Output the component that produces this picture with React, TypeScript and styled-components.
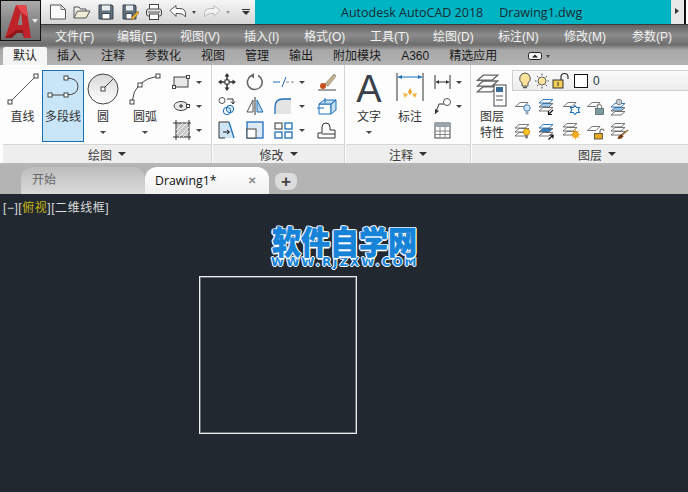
import React from 'react';
import styled, { createGlobalStyle } from 'styled-components';

const UI_FONT = '"Liberation Sans", "Noto Sans CJK SC", sans-serif';

const GlobalStyle = createGlobalStyle`
  html, body { margin: 0; padding: 0; background: #212830; }
  body { font-family: ${UI_FONT}; overflow: hidden; }
  #root { width: 688px; height: 492px; }
`;

const MENUS = [
  ['文件(F)', 62],
  ['编辑(E)', 63],
  ['视图(V)', 64],
  ['插入(I)', 60],
  ['格式(O)', 66],
  ['工具(T)', 63],
  ['绘图(D)', 65],
  ['标注(N)', 66],
  ['修改(M)', 68],
  ['参数(P)', 50],
] as const;

const TABS = ['默认', '插入', '注释', '参数化', '视图', '管理', '输出', '附加模块', 'A360', '精选应用'];

const Icon = ({ w = 20, h = 20, children }: { w?: number; h?: number; children: React.ReactNode }) => (
  <svg width={w} height={h} viewBox={`0 0 ${w} ${h}`} fill="none" style={{ display: 'block', flex: 'none' }}>
    {children}
  </svg>
);

const Grip = ({ x, y, s = 4 }: { x: number; y: number; s?: number }) => (
  <rect x={x - s / 2} y={y - s / 2} width={s} height={s} fill="#fff" stroke="#333" strokeWidth="0.9" />
);

const Layers = ({ top = '#666', fill = '#fff', x = 0, y = 0 }: { top?: string; fill?: string; x?: number; y?: number }) => (
  <g transform={`translate(${x} ${y})`} stroke="#666" strokeWidth="0.9">
    <path d="M1 13 L5 9.5 H15 L11 13Z" fill="#fff" />
    <path d="M1 9 L5 5.5 H15 L11 9Z" fill={fill} />
    <path d="M1 5 L5 1.5 H15 L11 5Z" fill="#fff" stroke={top} />
  </g>
);

const Sheet = () => <path d="M1.5 8.5 L6 4.5 H14 L10 8.5Z" fill="#fff" stroke="#666" strokeWidth="0.9" />;

const LAYER_ICONS = [
  <Icon key="0">
    <Sheet />
    <circle cx="13" cy="10" r="3.2" fill="#cfe4f6" stroke="#3b78b8" strokeWidth="0.9" />
    <rect x="11.6" y="13" width="2.8" height="3.4" fill="#8fa3b5" />
  </Icon>,
  <Icon key="1">
    <Layers fill="#9cc7ea" top="#1d6fb8" />
    <path d="M15 12 L10.5 16.5 M10.5 13 V16.5 H14" stroke="#111" strokeWidth="1.2" />
  </Icon>,
  <Icon key="2">
    <Sheet />
    <path d="M13 7.5 L14.8 9.5 H17.5 L16.2 12 L17.5 14.5 H14.8 L13 16.5 L11.2 14.5 H8.5 L9.8 12 L8.5 9.5 H11.2Z" fill="#fff" stroke="#1d6fb8" strokeWidth="1.1" />
  </Icon>,
  <Icon key="3">
    <Sheet />
    <rect x="9.5" y="10.5" width="8" height="6" fill="#7d9a9c" stroke="#56686a" strokeWidth="0.8" />
    <path d="M11.3 10.5 V8.8 a2.2 2.2 0 0 1 4.4 0 V10.5" stroke="#666" />
  </Icon>,
  <Icon key="4">
    <Layers fill="#8dc0e8" top="#1d6fb8" y={4} />
    <circle cx="9" cy="4" r="2.8" fill="#c6ced6" stroke="#777" strokeWidth="0.9" />
  </Icon>,
  <Icon key="5">
    <Layers y={1} />
    <circle cx="12.5" cy="10" r="3.1" fill="#ffc928" stroke="#c58600" strokeWidth="0.9" />
    <rect x="11.2" y="13" width="2.6" height="3.4" fill="#777" />
  </Icon>,
  <Icon key="6">
    <Layers top="#1d6fb8" fill="#2f7fc4" y={1} />
    <path d="M10.5 17.5 L15 13 M11.5 13 H15 V16.5" stroke="#111" strokeWidth="1.2" />
  </Icon>,
  <Icon key="7">
    <Layers />
    <circle cx="13.5" cy="12.5" r="2.9" fill="#ffb020" stroke="#e08a00" strokeWidth="0.8" />
    <path d="M13.5 7.5 V8.7 M13.5 16.3 V17.5 M8.5 12.5 H9.7 M17.3 12.5 H18.5 M10 9 L10.9 9.9 M17 9 L16.1 9.9 M10 16 L10.9 15.1 M17 16 L16.1 15.1" stroke="#f0a000" />
  </Icon>,
  <Icon key="8">
    <Sheet />
    <rect x="8.5" y="11.5" width="8" height="5.5" fill="#e8a820" stroke="#444" strokeWidth="0.8" />
    <path d="M14 11.5 V9 a2 2 0 0 1 4 0" stroke="#555" />
  </Icon>,
  <Icon key="9">
    <Layers />
    <path d="M18 8 L12 13" stroke="#9a6a30" strokeWidth="1.6" />
    <path d="M7.5 17 Q8 13.5 11.5 12 L13.5 14.5 Q11.5 17.5 7.5 17Z" fill="#7a3f10" />
  </Icon>,
];

export default function App() {
  return (
    <Window>
      <GlobalStyle />
      <AppButton>
        <svg width="26" height="35" viewBox="0 0 26 35" style={{ flex: 'none' }}>
          <path d="M0 35 L11 2 H21 L26 35 H19 L18 27 H11 L6.5 35Z M12.5 22 H17.5 L16 9Z" fill="#bf2228" fillRule="evenodd" />
          <path d="M11 2 H21 L23 14 L16 9Z" fill="#e2494e" />
          <path d="M0 35 L11 27 H18 L19 35 L17 30 H12 L6.5 35Z" fill="#8f1519" />
        </svg>
        <AppCaret />
      </AppButton>

      <TitleBar>
        <Qat>
          <QatIcon>
            <Icon w={18} h={18}>
              <path d="M1.5 2 H12 L16.5 6.5 V16 H1.5Z" fill="#fafafa" stroke="#555" />
              <path d="M12 2 V6.5 H16.5" stroke="#777" />
            </Icon>
          </QatIcon>
          <QatIcon>
            <Icon w={18} h={18}>
              <path d="M1 15 V4 H6 L7.5 6 H13 V8" fill="#eee" stroke="#555" />
              <path d="M1 15 L4.5 8 H17 L13 15Z" fill="#f1ecd8" stroke="#555" />
            </Icon>
          </QatIcon>
          <QatIcon>
            <Icon w={18} h={18}>
              <path d="M2 2 H15 L16 3 V16 H2Z" fill="#61707c" stroke="#3b4650" />
              <rect x="5" y="2.5" width="8" height="5" fill="#e8edf0" />
              <rect x="5" y="10.5" width="8" height="5.5" fill="#fff" stroke="#3b4650" />
            </Icon>
          </QatIcon>
          <QatIcon>
            <Icon w={18} h={18}>
              <path d="M2 2 H14 L15 3 V16 H2Z" fill="#61707c" stroke="#3b4650" />
              <rect x="5" y="2.5" width="7" height="5" fill="#e8edf0" />
              <rect x="5" y="10.5" width="6" height="5.5" fill="#fff" stroke="#3b4650" />
              <path d="M10 17 L11 14 L17 8 L18 10 L12.5 16Z" fill="#f0b030" stroke="#8a6a20" strokeWidth="0.6" />
            </Icon>
          </QatIcon>
          <QatIcon>
            <Icon w={18} h={18}>
              <rect x="4.5" y="1.5" width="9" height="5" fill="#fff" stroke="#444" />
              <rect x="1.5" y="6" width="15" height="7" rx="2" fill="#e6e6e6" stroke="#444" />
              <rect x="4.5" y="11" width="9" height="5.5" fill="#fff" stroke="#444" />
              <path d="M3 9 H15" stroke="#555" />
            </Icon>
          </QatIcon>
          <QatIcon>
            <Icon w={18} h={18}>
              <path d="M1 7.5 L7 2.5 V5.5 H11 Q16.5 5.5 16.5 11 V14 Q14.5 10.5 10.5 10.5 H7 V13.5Z" fill="#fdfdfd" stroke="#555" />
            </Icon>
          </QatIcon>
          <MiniCaret $light={false} />
          <QatIcon>
            <Icon w={18} h={18}>
              <path d="M17 7.5 L11 2.5 V5.5 H7 Q1.5 5.5 1.5 11 V14 Q3.5 10.5 7.5 10.5 H11 V13.5Z" fill="#f1f1f1" stroke="#bbb" />
            </Icon>
          </QatIcon>
          <MiniCaret $light />
          <QatMenu />
        </Qat>
        <TitleCenter>
          <span>Autodesk AutoCAD 2018</span>
          <span>Drawing1.dwg</span>
        </TitleCenter>
        <TitleArrow />
        <TitleEnd />
      </TitleBar>

      <MenuBar>
        {MENUS.map(([label, width]) => (
          <MenuItem key={label} style={{ width }}>
            {label}
          </MenuItem>
        ))}
      </MenuBar>

      <TabStrip>
        {TABS.map((t, i) => (
          <RibbonTab key={t} $active={i === 0}>
            {t}
          </RibbonTab>
        ))}
        <RibbonToggle>
          <svg width="16" height="9" viewBox="0 0 16 9">
            <rect x="0.5" y="0.5" width="13" height="7" rx="2" fill="#f4f4f4" stroke="#222" />
            <path d="M4 5.5 L7 2.5 L10 5.5Z" fill="#222" />
          </svg>
          <MiniCaret $light={false} />
        </RibbonToggle>
      </TabStrip>

      <Ribbon>
        <Panel $w={208} $title="绘图">
          <PanelBody>
            <LargeButton $w={39}>
              <Icon w={32} h={32}>
                <path d="M3 29 L29 3" stroke="#555" />
                <Grip x={3} y={29} />
                <Grip x={29} y={3} />
              </Icon>
              <LargeLabel>直线</LargeLabel>
            </LargeButton>
            <LargeButton $w={42} $active>
              <Icon w={34} h={32}>
                <path d="M4 22 H20 M20 5 Q32 5 32 13.5 Q32 22 20 22" stroke="#444" />
                <Grip x={4} y={22} />
                <Grip x={20} y={22} />
                <Grip x={20} y={5} />
              </Icon>
              <LargeLabel>多段线</LargeLabel>
            </LargeButton>
            <LargeButton $w={38}>
              <Icon w={32} h={32}>
                <defs>
                  <linearGradient id="circleFill" x1="0" y1="0" x2="0" y2="1">
                    <stop offset="0" stopColor="#d8d8d8" />
                    <stop offset="1" stopColor="#fff" />
                  </linearGradient>
                </defs>
                <circle cx="16" cy="16" r="15" fill="url(#circleFill)" stroke="#444" />
                <path d="M16 16 L26 6" stroke="#444" />
                <Grip x={16} y={16} />
              </Icon>
              <LargeLabel>圆</LargeLabel>
              <SmallDown />
            </LargeButton>
            <LargeButton $w={46}>
              <Icon w={32} h={32}>
                <path d="M3 29 Q5 7 29 3" stroke="#444" />
                <Grip x={3} y={29} />
                <Grip x={11} y={12} />
                <Grip x={29} y={3} />
              </Icon>
              <LargeLabel>圆弧</LargeLabel>
              <SmallDown />
            </LargeButton>
            <SmallColumn>
              <SmallRow>
                <Icon>
                  <rect x="3" y="5" width="14" height="10" fill="#e8e8e8" stroke="#444" />
                  <Grip x={3} y={15} s={3} />
                  <Grip x={17} y={5} s={3} />
                </Icon>
                <SideCaret />
              </SmallRow>
              <SmallRow>
                <Icon>
                  <ellipse cx="10" cy="10" rx="7" ry="4.5" fill="#e8e8e8" stroke="#444" />
                  <path d="M8 10 H12 M10 8 V12" stroke="#222" />
                  <Grip x={17} y={10} s={3} />
                </Icon>
                <SideCaret />
              </SmallRow>
              <SmallRow>
                <Icon>
                  <rect x="5" y="3" width="13" height="14" fill="#c8c8c8" stroke="#333" />
                  <path d="M5 10 L12 3 M5 14 L16 3 M8 17 L18 7 M12 17 L18 11" stroke="#fff" strokeWidth="0.8" />
                  <path d="M2 3 H5 M18 17 H20 M5 0 V3 M18 17 V20 M2 17 H5 M5 17 V20 M18 0 V3 M18 3 H20" stroke="#333" />
                </Icon>
                <SideCaret />
              </SmallRow>
            </SmallColumn>
          </PanelBody>
        </Panel>

        <Panel $w={131} $title="修改">
          <ToolGrid>
            <ToolCell>
              <Icon>
                <path d="M10 3 V17 M3 10 H17" stroke="#333" strokeWidth="1.6" />
                <path d="M10 1 L7.5 4.5 H12.5Z M10 19 L7.5 15.5 H12.5Z M1 10 L4.5 7.5 V12.5Z M19 10 L15.5 7.5 V12.5Z" fill="#333" />
                <rect x="8" y="8" width="4" height="4" fill="#fff" stroke="#333" />
              </Icon>
            </ToolCell>
            <ToolCell>
              <Icon>
                <path d="M13 3.5 A7.4 7.4 0 1 1 6 3.8" stroke="#666" strokeWidth="1.6" />
                <path d="M9 1 L5 3.7 L9 6.5Z" fill="#666" />
              </Icon>
            </ToolCell>
            <ToolCell $caret>
              <Icon w={24}>
                <path d="M1 10 H8" stroke="#1d6fb8" />
                <path d="M14 10 H23" stroke="#888" strokeDasharray="3 2" />
                <path d="M10 15 L14 5" stroke="#1d6fb8" />
              </Icon>
              <ToolCaret />
            </ToolCell>
            <ToolCell>
              <Icon w={22}>
                <path d="M9 12 L18 2 L20 4 L12 14Z" fill="#c9b48a" stroke="#777" strokeWidth="0.7" />
                <circle cx="7" cy="14" r="3" fill="#c8501e" />
                <path d="M2 18 H20" stroke="#444" />
              </Icon>
            </ToolCell>

            <ToolCell>
              <Icon>
                <circle cx="5" cy="4.5" r="3" stroke="#555" />
                <circle cx="13" cy="13" r="3.7" fill="#d8ebf8" stroke="#1d6fb8" />
                <circle cx="10" cy="15" r="3.7" stroke="#1d6fb8" />
                <path d="M10 3 H16 V7 M14 5.5 L16 8 L18 5.5" stroke="#333" />
              </Icon>
            </ToolCell>
            <ToolCell>
              <Icon>
                <path d="M10 1 V19" stroke="#333" />
                <path d="M8 4 V16 H2Z" stroke="#555" />
                <path d="M12 4 V16 H18Z" fill="#b8d4ea" stroke="#1d6fb8" />
              </Icon>
            </ToolCell>
            <ToolCell $caret>
              <Icon w={24}>
                <path d="M3 18 V11 Q3 3 11 3 H19 V18Z" fill="#e4e4e4" />
                <path d="M3 18 V11 Q3 3 11 3 H19" stroke="#1d6fb8" strokeWidth="1.3" />
              </Icon>
              <ToolCaret />
            </ToolCell>
            <ToolCell>
              <Icon w={22}>
                <path d="M3 8 H15 V18 H3Z" fill="#fff" stroke="#1d6fb8" />
                <path d="M3 8 L8 4 H20 L15 8Z M15 8 L20 4 V14 L15 18Z" fill="#c4dff2" stroke="#1d6fb8" />
                <path d="M1 12 H8 M9 2 V7" stroke="#1d6fb8" />
              </Icon>
            </ToolCell>

            <ToolCell>
              <Icon>
                <path d="M2 2 H12 L17 18 H2Z" fill="#cfe4f4" />
                <path d="M12 2 H2 V18 H8" stroke="#333" />
                <path d="M12 2 L17 18" stroke="#1d6fb8" strokeWidth="1.3" />
                <path d="M6 12 H12 M10 10 L12.5 12 L10 14" stroke="#111" />
              </Icon>
            </ToolCell>
            <ToolCell>
              <Icon>
                <rect x="2" y="2" width="16" height="16" fill="#dbeaf6" stroke="#1d6fb8" strokeWidth="1.3" />
                <rect x="2" y="9" width="9" height="9" fill="#fff" stroke="#444" />
              </Icon>
            </ToolCell>
            <ToolCell $caret>
              <Icon w={24}>
                <rect x="3" y="3" width="7" height="6" stroke="#333" />
                <rect x="13" y="3" width="7" height="6" stroke="#1d6fb8" strokeWidth="1.3" />
                <rect x="3" y="12" width="7" height="6" stroke="#1d6fb8" strokeWidth="1.3" />
                <rect x="13" y="12" width="7" height="6" stroke="#1d6fb8" strokeWidth="1.3" />
              </Icon>
              <ToolCaret />
            </ToolCell>
            <ToolCell>
              <Icon w={22}>
                <path d="M2 18 V13 H6 V7 Q6 3 10 3 Q14 3 14 7 V10 H19 V18Z" fill="#fff" stroke="#333" />
                <path d="M6 14 H19" stroke="#333" />
              </Icon>
            </ToolCell>
          </ToolGrid>
        </Panel>

        <Panel $w={124} $title="注释">
          <PanelBody>
            <LargeButton $w={46}>
              <BigA>A</BigA>
              <LargeLabel>文字</LargeLabel>
              <SmallDown />
            </LargeButton>
            <LargeButton $w={36}>
              <Icon w={28} h={32}>
                <path d="M1 0 V28 M27 0 V28" stroke="#333" />
                <path d="M2 4 H26" stroke="#1d6fb8" />
                <path d="M2 4 L6 2 V6Z M26 4 L22 2 V6Z" fill="#1d6fb8" />
                <path d="M14 15 L12 19 L14 22 L16 19Z" fill="#f0a020" />
                <path d="M7 20 L12 21 L9 25Z M21 20 L16 21 L19 25Z" fill="#f2b440" />
              </Icon>
              <LargeLabel>标注</LargeLabel>
            </LargeButton>
            <SmallColumn>
              <SmallRow>
                <Icon>
                  <path d="M4 3 V17 M19 3 V17" stroke="#333" />
                  <path d="M5 10 H18" stroke="#333" />
                  <path d="M5 10 L8 8 V12Z M18 10 L15 8 V12Z" fill="#333" />
                </Icon>
                <SideCaret />
              </SmallRow>
              <SmallRow>
                <Icon>
                  <path d="M4 18 L8 8 H13" stroke="#333" />
                  <path d="M4 18 L4 13 L8 15Z" fill="#333" />
                  <circle cx="16" cy="6" r="3.5" fill="#fff" stroke="#555" />
                </Icon>
                <SideCaret />
              </SmallRow>
              <SmallRow>
                <Icon>
                  <rect x="4" y="3" width="15" height="15" fill="#fff" stroke="#444" />
                  <rect x="4" y="3" width="15" height="4" fill="#9aa4ad" />
                  <path d="M4 11 H19 M4 14.5 H19 M9 7 V18 M14 7 V18" stroke="#888" />
                </Icon>
              </SmallRow>
            </SmallColumn>
          </PanelBody>
        </Panel>

        <Panel $w={250} $title="图层">
          <PanelBody>
            <LargeButton $w={40}>
              <Icon w={32} h={34}>
                <g transform="scale(1.45)">
                  <Layers />
                </g>
                <rect x="18" y="12" width="12" height="21" fill="#fff" stroke="#444" />
                <rect x="20" y="14" width="7" height="5" fill="#3c6a96" />
                <path d="M20 23 H27 M20 27 H27" stroke="#555" />
              </Icon>
              <TwoLineLabel>
                图层
                <br />
                特性
              </TwoLineLabel>
            </LargeButton>
            <LayerSide>
              <LayerCombo>
                <Icon w={14} h={18}>
                  <path d="M7 1 a5.5 5.5 0 0 0 -3 10 V14 H10 V11 A5.5 5.5 0 0 0 7 1Z" fill="#fbe39a" stroke="#555" />
                  <path d="M5 15.5 H9" stroke="#555" strokeWidth="1.5" />
                </Icon>
                <Icon w={16} h={18}>
                  <circle cx="8" cy="9" r="4" fill="#fbe39a" stroke="#666" />
                  <path d="M8 1.5 V3.5 M8 14.5 V16.5 M1 9 H2.5 M13.5 9 H15 M3 4 L4.3 5.3 M13 4 L11.7 5.3 M3 14 L4.3 12.7 M13 14 L11.7 12.7" stroke="#555" />
                </Icon>
                <Icon w={18} h={18}>
                  <rect x="1" y="8" width="10" height="8" fill="#f3cf55" stroke="#333" />
                  <path d="M9 8 V5 a3.5 3.5 0 0 1 7 0 V7" stroke="#333" strokeWidth="1.2" />
                  <path d="M6 10 V14" stroke="#333" />
                </Icon>
                <ColorSwatch />
                <LayerName>0</LayerName>
              </LayerCombo>
              <LayerTools>{LAYER_ICONS}</LayerTools>
            </LayerSide>
          </PanelBody>
        </Panel>
      </Ribbon>

      <DocTabs>
        <StartTab>开始</StartTab>
        <DrawingTab>
          Drawing1*
          <CloseMark>✕</CloseMark>
        </DrawingTab>
        <PlusTab>+</PlusTab>
      </DocTabs>

      <Canvas>
        <ViewportLabel>
          [−][<Highlight>俯视</Highlight>][二维线框]
        </ViewportLabel>
        <Watermark>
          <WatermarkTitle>软件自学网</WatermarkTitle>
          <WatermarkUrl>WWW.RJZXW.COM</WatermarkUrl>
        </Watermark>
        <DrawnSquare />
      </Canvas>
    </Window>
  );
}

const Window = styled.div`
  position: relative;
  width: 688px;
  height: 492px;
  display: flex;
  flex-direction: column;
  overflow: hidden;
  background: #212830;
`;

const AppButton = styled.div`
  position: absolute;
  left: 0;
  top: 0;
  width: 41px;
  height: 41px;
  box-sizing: border-box;
  border: 1px solid #111;
  background: linear-gradient(#aaaaaa, #868686 55%, #707070);
  display: flex;
  align-items: center;
  padding-left: 4px;
  z-index: 2;
`;

const AppCaret = styled.span`
  margin-left: 1px;
  width: 0;
  height: 0;
  border: 3.5px solid transparent;
  border-top: 4px solid #e8e8e8;
  border-bottom: 0;
  flex: none;
`;

const TitleBar = styled.div`
  height: 24px;
  flex: none;
  display: flex;
  background: #00b4c4;
  border-bottom: 1px solid #3a3a3a;
`;

const Qat = styled.div`
  width: 255px;
  flex: none;
  padding-left: 46px;
  box-sizing: border-box;
  display: flex;
  align-items: center;
  background: linear-gradient(#f6f6f6, #d6d6d6);
`;

const QatIcon = styled.span`
  width: 24px;
  display: flex;
  justify-content: center;
  flex: none;
`;

const MiniCaret = styled.span<{ $light: boolean }>`
  width: 0;
  height: 0;
  margin: 0 4px 0 2px;
  border: 2.5px solid transparent;
  border-top: 3px solid ${(p) => (p.$light ? '#9a9a9a' : '#444')};
  border-bottom: 0;
  flex: none;
`;

const QatMenu = styled.span`
  width: 8px;
  height: 6px;
  margin-left: 8px;
  border-top: 1px solid #333;
  flex: none;
  &::after {
    content: '';
    display: block;
    margin-top: 1px;
    width: 0;
    height: 0;
    border: 4px solid transparent;
    border-top: 4px solid #333;
    border-bottom: 0;
  }
`;

const TitleCenter = styled.div`
  flex: 1;
  display: flex;
  gap: 16px;
  align-items: center;
  padding-left: 86px;
  font: 12.5px "Open Sans", "Liberation Sans", sans-serif;
  color: #1c2a30;
  white-space: nowrap;
`;

const TitleArrow = styled.div`
  width: 13px;
  flex: none;
  background: #e8e8e8;
  box-sizing: border-box;
  padding: 8px 0 0 4px;
  &::after {
    content: '';
    display: block;
    width: 0;
    height: 0;
    border: 3px solid transparent;
    border-left: 4px solid #333;
    border-right: 0;
  }
`;

const TitleEnd = styled.div`
  width: 4px;
  flex: none;
  background: #fff;
  border-left: 2px solid #111;
  box-sizing: border-box;
`;

const MenuBar = styled.div`
  height: 20px;
  flex: none;
  display: flex;
  align-items: center;
  padding-left: 55px;
  background: linear-gradient(#626262, #8c8c8c 50%, #6c6c6c);
  font-size: 12px;
  color: #f2f2f2;
  white-space: nowrap;
`;

const MenuItem = styled.div`
  flex: none;
`;

const TabStrip = styled.div`
  height: 20px;
  flex: none;
  display: flex;
  align-items: flex-end;
  padding-left: 3px;
  background: linear-gradient(#707070, #a8a8a8 25%, #b2b2b2);
  font-size: 12px;
  color: #1a1a1a;
`;

const RibbonTab = styled.div<{ $active: boolean }>`
  height: 18px;
  line-height: 18px;
  padding: 0 10px;
  background: ${(p) => (p.$active ? '#f5f5f5' : 'transparent')};
  border-radius: 2px 2px 0 0;
  white-space: nowrap;
`;

const RibbonToggle = styled.div`
  display: flex;
  align-items: center;
  height: 18px;
  margin-left: 21px;
`;

const Ribbon = styled.div`
  height: 100px;
  flex: none;
  display: flex;
  gap: 2px;
  padding-left: 3px;
  box-sizing: border-box;
  background: #fdfdfd;
  border-bottom: 2px solid #b8b8b8;
`;

const PanelFrame = styled.div<{ $w: number }>`
  width: ${(p) => p.$w}px;
  flex: none;
  display: flex;
  flex-direction: column;
  box-shadow: 1px 0 0 #d4d4d4;
`;

const PanelContent = styled.div`
  flex: 1;
  min-height: 0;
`;

const PanelFoot = styled.div`
  height: 18px;
  flex: none;
  display: flex;
  align-items: center;
  justify-content: center;
  gap: 6px;
  border-top: 1px solid #d6d6d6;
  background: #eeeeee;
  font-size: 12px;
  color: #3a3a3a;
  &::after {
    content: '';
    width: 0;
    height: 0;
    border: 4px solid transparent;
    border-top: 4px solid #333;
    border-bottom: 0;
  }
`;

const Panel = ({ $w, $title, children }: { $w: number; $title: string; children: React.ReactNode }) => (
  <PanelFrame $w={$w}>
    <PanelContent>{children}</PanelContent>
    <PanelFoot>{$title}</PanelFoot>
  </PanelFrame>
);

const PanelBody = styled.div`
  display: flex;
  height: 100%;
  box-sizing: border-box;
  padding-top: 5px;
`;

const LargeButton = styled.div<{ $w: number; $active?: boolean }>`
  width: ${(p) => p.$w}px;
  flex: none;
  box-sizing: border-box;
  height: 72px;
  padding-top: 2px;
  display: flex;
  flex-direction: column;
  align-items: center;
  border: 1px solid ${(p) => (p.$active ? '#1a6fb0' : 'transparent')};
  background: ${(p) => (p.$active ? '#c9e6f8' : 'transparent')};
`;

const LargeLabel = styled.div`
  margin-top: 4px;
  font-size: 12px;
  line-height: 16px;
  color: #333;
  white-space: nowrap;
`;

const TwoLineLabel = styled(LargeLabel)`
  margin-top: 2px;
  text-align: center;
`;

const SmallDown = styled.span`
  margin-top: 6px;
  width: 0;
  height: 0;
  border: 3px solid transparent;
  border-top: 3.5px solid #444;
  border-bottom: 0;
`;

const SideCaret = styled(SmallDown)`
  margin: 0 0 0 5px;
  flex: none;
`;

const ToolCaret = styled(SideCaret)`
  margin-left: 3px;
`;

const SmallColumn = styled.div`
  display: flex;
  flex-direction: column;
  gap: 4px;
  padding: 2px 0 0 3px;
`;

const SmallRow = styled.div`
  display: flex;
  align-items: center;
  height: 20px;
`;

const ToolGrid = styled.div`
  display: grid;
  grid-template-columns: 26px 30px 44px 26px;
  grid-auto-rows: 24px;
  justify-content: start;
  padding: 5px 0 0 1px;
`;

const ToolCell = styled.div<{ $caret?: boolean }>`
  display: flex;
  align-items: center;
  justify-content: ${(p) => (p.$caret ? 'flex-start' : 'center')};
  padding-left: ${(p) => (p.$caret ? '2px' : '0')};
`;

const BigA = styled.div`
  font: 38px/32px "Liberation Sans", sans-serif;
  color: #3a4048;
  height: 32px;
`;

const LayerSide = styled.div`
  flex: 1;
  display: flex;
  flex-direction: column;
`;

const LayerCombo = styled.div`
  height: 20px;
  display: flex;
  align-items: center;
  gap: 2px;
  padding-left: 5px;
  border: 1px solid #cfcfcf;
  background: linear-gradient(#fafafa, #ececec);
  font-size: 12px;
`;

const ColorSwatch = styled.span`
  width: 12px;
  height: 12px;
  border: 1px solid #111;
  background: #fff;
  margin: 0 3px 0 2px;
`;

const LayerName = styled.span`
  color: #2d3a45;
`;

const LayerTools = styled.div`
  display: grid;
  grid-template-columns: repeat(5, 24px);
  grid-auto-rows: 24px;
  justify-content: start;
  padding: 5px 0 0 2px;
  align-items: center;
`;

const DocTabs = styled.div`
  height: 29px;
  flex: none;
  display: flex;
  align-items: flex-end;
  padding-left: 21px;
  background: #b4b4b4;
  box-sizing: border-box;
`;

const StartTab = styled.div`
  width: 124px;
  height: 27px;
  line-height: 27px;
  padding-left: 11px;
  box-sizing: border-box;
  flex: none;
  font-size: 12px;
  color: #666;
  background: linear-gradient(#bdbdbd, #dadada);
  border-radius: 12px 12px 0 0;
`;

const DrawingTab = styled.div`
  width: 124px;
  height: 27px;
  padding: 0 13px 0 10px;
  flex: none;
  box-sizing: border-box;
  display: flex;
  justify-content: space-between;
  font: 12.3px/27px "Open Sans", "Liberation Sans", sans-serif;
  color: #111;
  background: linear-gradient(#fff, #f0f0f0);
  border-radius: 12px 12px 0 0;
`;

const CloseMark = styled.span`
  color: #8a8a8a;
  font-size: 10px;
  font-weight: bold;
`;

const PlusTab = styled.div`
  width: 22px;
  height: 17px;
  margin: 0 0 4px 6px;
  flex: none;
  text-align: center;
  font: bold 17px/17px "Liberation Sans", sans-serif;
  color: #444;
  background: #dcdcdc;
  border-radius: 6px 6px 8px 8px;
`;

const Canvas = styled.div`
  position: relative;
  flex: 1;
  background: #212830;
`;

const ViewportLabel = styled.div`
  position: absolute;
  left: 3px;
  top: 6px;
  font-size: 12px;
  line-height: 16px;
  letter-spacing: 0.55px;
  color: #dcdcdc;
  white-space: nowrap;
`;

const Highlight = styled.span`
  color: #c6b416;
`;

const Watermark = styled.div`
  position: absolute;
  left: 271px;
  top: 30px;
  width: 147px;
  text-align: center;
  color: #1583d8;
  font-weight: 900;
`;

const WatermarkTitle = styled.div`
  font-family: "Noto Sans CJK SC", sans-serif;
  font-size: 29px;
  line-height: 33px;
  height: 33px;
  white-space: nowrap;
  transform: scaleY(1.1);
  -webkit-text-stroke: 0.6px #1583d8;
  text-shadow: 1.5px 0 0 #fff, -1.5px 0 0 #fff, 0 1.5px 0 #fff, 0 -1.5px 0 #fff, 1px 1px 0 #fff, -1px -1px 0 #fff, 1px -1px 0 #fff, -1px 1px 0 #fff;
`;

const WatermarkUrl = styled.div`
  font: bold 12px/11px "DejaVu Sans", sans-serif;
  letter-spacing: 1.9px;
  white-space: nowrap;
  text-shadow: 1px 0 0 #fff, -1px 0 0 #fff, 0 1px 0 #fff, 0 -1px 0 #fff;
`;

const DrawnSquare = styled.div`
  position: absolute;
  left: 199px;
  top: 82px;
  width: 158px;
  height: 158px;
  box-sizing: border-box;
  border: 1px solid #ececec;
  box-shadow: inset 0 0 0 1px rgba(220, 220, 220, 0.4);
`;
